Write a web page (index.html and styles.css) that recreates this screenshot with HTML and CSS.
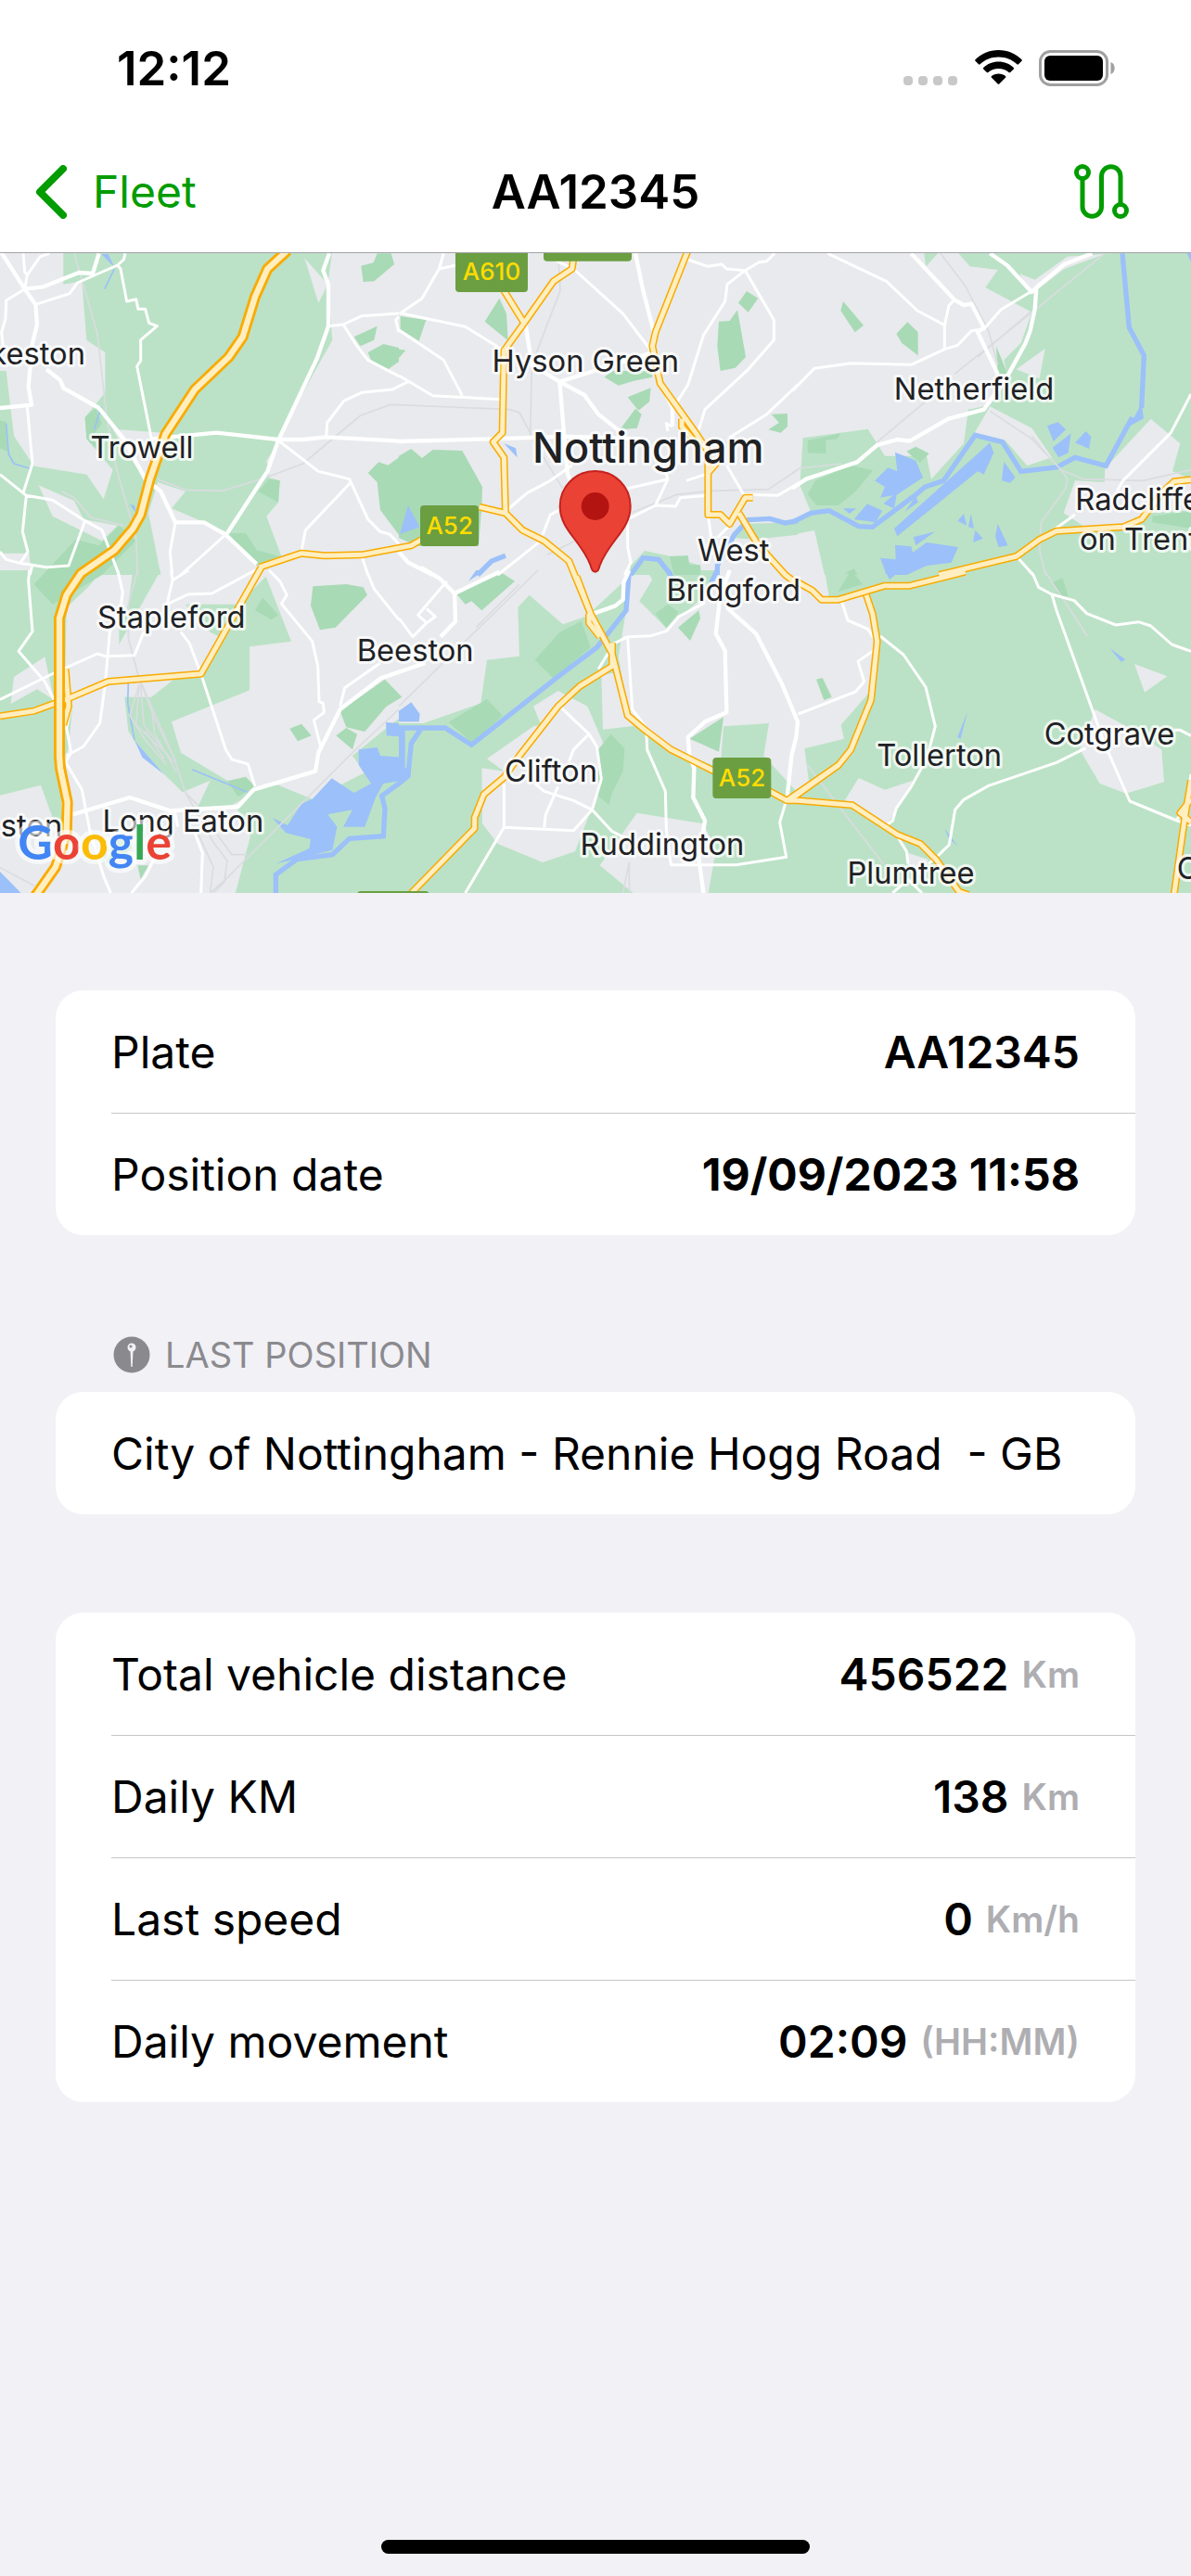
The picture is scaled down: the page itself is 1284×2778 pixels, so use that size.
FILE: index.html
```html
<!DOCTYPE html>
<html lang="en">

<head>
    <meta charset="UTF-8">
    <meta name="viewport" content="width=device-width, initial-scale=1.0">
    <title>AA12345</title>
    <link rel="stylesheet" href="styles.css">
</head>

<body>
    <header class="top">
        <div class="status">
            <span class="time">12:12</span>
            <div class="statusIcons">
                <svg width="59" height="38" viewBox="0 0 59 38" fill="#c8c8c8">
                    <rect x="0" y="28" width="10" height="10" rx="4" />
                    <rect x="16" y="28" width="10" height="10" rx="4" />
                    <rect x="32" y="28" width="10" height="10" rx="4" />
                    <rect x="48" y="28" width="10" height="10" rx="4" />
                </svg>
                <svg width="51" height="38" viewBox="0 0 51 38">
                    <path d="M25.500 0C35.500 0 44 4 50.500 10.200Q51.200 11 50.500 11.800L47 15.300Q46.200 16 45.400 15.300C40 10.200 33 7.500 25.500 7.500S11 10.200 5.600 15.300Q4.800 16 4 15.300L.5 11.800Q-.2 11 .5 10.200C7 4 15.500 0 25.500 0Z" />
                    <path d="M25.500 12.500C31.800 12.500 37.500 14.900 41.800 18.900Q42.500 19.700 41.800 20.500L38.200 24Q37.400 24.700 36.600 24C33.600 21.400 29.700 19.900 25.500 19.900S17.400 21.400 14.400 24Q13.600 24.700 12.800 24L9.200 20.500Q8.500 19.700 9.200 18.900C13.500 14.900 19.200 12.500 25.500 12.500Z" />
                    <path d="M25.500 25.500C28.500 25.500 31.200 26.600 33.200 28.200Q33.800 28.900 33.200 29.600L26.300 36.500Q25.500 37.200 24.700 36.500L17.800 29.600Q17.200 28.900 17.800 28.200C19.800 26.600 22.500 25.500 25.500 25.500Z" />
                </svg>
                <svg width="82" height="39" viewBox="0 0 82 39">
                    <rect x="1.500" y="1.500" width="72" height="36" rx="11" fill="none" stroke="#a0a0a0" stroke-width="3" />
                    <rect x="6" y="6" width="63" height="27" rx="6" />
                    <path d="M77.500 13C83 15 83 24 77.500 26Z" fill="#a0a0a0" />
                </svg>
            </div>
        </div>
        <nav class="navBar">
            <a class="back" href="#fleet">
                <svg width="34" height="58" viewBox="0 0 34 58">
                    <path d="M30 4L5 29L30 54" />
                </svg>
                Fleet
            </a>
            <h1>AA12345</h1>
            <button class="routeButton" type="button" aria-label="Route">
                <svg width="60" height="60" viewBox="0 0 60 60">
                    <circle cx="9" cy="9" r="6.500" />
                    <circle cx="50" cy="50" r="6.500" />
                    <path d="M9 16V46A10 10 0 0 0 29.500 46V13A10 10 0 0 1 50 13V43" />
                </svg>
            </button>
        </nav>
    </header>

    <!-- map units are a third of a pixel on the widest phone -->
    <svg class="map" viewBox="0 0 3852 2070" role="img" aria-label="Map of Nottingham">
        <g class="land">
            <path transform="translate(0 -9)" d="M205 0H1075L1060 110 1075 290 980 460 900 620 862 680 870 735 905 745 900 815 862 860 910 990 870 1000 730 910 555 835 600 780 510 750 480 850 520 1050H100L95 980H0V390H20L45 600 110 698 280 725 335 805 365 710 280 610 275 540 340 460V330L280 290 265 100 205 110Z" />
            <path transform="translate(1290 -9)" d="M750 1020L795 972 880 990 975 1020 980 1050H745ZM1080 930L1110 885 1290 880V920L1150 935Z" />
            <path transform="translate(2562 -9)" d="M425 0H480L433 52ZM530 0L575 52 665 63 625 120 775 200 740 300 685 355 700 420 640 500 570 515 555 625 450 740 435 665 300 665 245 578 35 607 25 760 60 845 0 870V920L72 905 105 1050H1290V0Z" />
            <path transform="translate(0 1026)" d="M0 0H330L285 55 215 120 210 400 235 440 220 580 195 640 200 830 170 800 132 695 0 728ZM430 0H520L385 240V180L415 110ZM600 110H770L860 20 942 230 807 247V388L555 490 585 590 735 680 830 700 820 720 740 765H640L680 680 590 718 460 590 415 520 403 410H490L560 355 655 330 720 220 680 200ZM1290 480L1250 510 1140 600 1180 655 1010 740 900 695 830 700 765 765 810 860 760 1050H1290ZM330 920L400 850 430 900 350 950Z" />
            <path transform="translate(1290 1026)" d="M0 495H80L265 430 285 290 390 278 385 120 422 80 530 175 605 150 745 20 735 130 710 280 745 480 880 580 1040 640 1050 505 1197 495 1180 600 1290 720V1050H0ZM800 0H1030L970 100 865 187 778 100 820 30Z" />
            <path transform="translate(2562 1026)" d="M105 0H1290V1050H0V735L55 690 40 577 168 545 158 500 250 395 270 200 240 80 120 90Z" />
        </g>
        <g class="town">
            <path transform="translate(0 -9)" d="M365 578L530 590 480 740 440 700 400 640ZM125 760L240 810 270 870 380 890 330 940 170 860ZM985 25L1060 110 1030 170Z" />
            <path transform="translate(2562 -9)" d="M735 75L785 95 890 20 1010 12 880 60 790 130 765 130ZM725 385L818 318 800 415ZM640 505L775 575 840 670 760 697 690 615 590 590ZM1160 545L1255 625 1230 715 1290 740V840L1160 850 1070 895 940 890 878 850 915 745 1010 750 1012 705Z" />
            <path transform="translate(0 1026)" d="M45 345L145 280 175 420 120 385 35 432Z" />
            <path transform="translate(1290 1026)" d="M268 640L340 650 285 610 435 505 460 500 435 440 515 390 610 440 670 580 650 700 570 910 465 945 320 885 270 820ZM655 340L705 330 745 480 790 500 660 515ZM770 785L985 820 1025 905 1000 1050H765L650 955Z" />
            <path transform="translate(2562 1026)" d="M215 672L300 710 390 680 330 790 300 830 170 745ZM375 915L440 935 430 1000 375 960ZM980 450L1090 510 1195 580 1203 685 1080 722 995 690 930 580ZM1107 303L1213 343 1140 395Z" />
        </g>
        <g class="park">
            <path transform="translate(0 -9)" d="M1168 50L1208 40 1220 10H1265L1275 45 1210 100 1175 102ZM1145 280L1220 245 1210 290 1165 310ZM1190 330L1240 303 1290 315V360L1255 385 1200 355ZM1190 720L1225 685 1255 695 1290 670V920L1230 840 1220 750ZM835 780L870 740 905 745 900 815ZM735 915H795L830 970 905 990 830 1020ZM275 540L310 510 330 560 300 600 320 650 280 610ZM0 550L20 555 25 650 0 640ZM110 1080L245 935 320 955 385 890 440 940 330 1050 170 1145Z" />
            <path transform="translate(1290 -9)" d="M5 213L88 225 65 293 5 255ZM325 155L348 205 353 292 278 230ZM1125 132L1162 155 1130 200 1098 170ZM1095 193L1122 345 1088 380 1040 390 1030 310 1035 230 1070 228ZM665 410L690 390 820 390 820 410 760 422 710 437ZM740 475L815 445 810 490 775 518ZM765 512L785 530 770 575 715 580ZM1205 530L1257 528V570L1235 590 1195 580 1230 558ZM0 665L40 642 75 672 110 645 205 648 270 765 268 825 258 957H60L0 930ZM0 320L22 323 0 348ZM875 990L935 987 940 1018H975V1050H890Z" />
            <path transform="translate(2562 -9)" d="M165 165L231 243 203 265 157 195ZM373 232L407 265V340L355 300 337 270ZM50 615L158 592 145 610 108 615 110 657 50 655ZM50 790L75 745 190 695 262 712 205 780 150 825H80ZM370 650L400 635 443 657 413 688ZM660 310L697 400H665ZM170 1045L200 1030 212 1050ZM1165 860L1290 845V900L1165 880Z" />
            <path transform="translate(0 1026)" d="M1012 52L1120 45 1175 55 1188 80 1085 185 1035 193 1005 115ZM937 512L975 497 1007 535 963 553ZM1100 455L1245 353 1300 410 1250 440 1180 522 1120 508ZM1087 535L1120 510 1155 530 1140 580ZM735 682L795 668 825 700 770 733ZM825 130L850 88 900 145 878 160ZM445 955H480L455 1000Z" />
            <path transform="translate(1290 1026)" d="M185 75L335 10 375 35 268 130 235 100 215 110ZM440 290L520 200 590 165 610 220 620 250 500 350ZM160 492L285 417 335 470 240 560ZM830 140L870 110 905 135 865 187ZM903 185L970 130 975 155 942 228ZM940 545L1050 475 1035 587ZM645 580L685 530 730 575 725 650 690 720 680 760 645 730Z" />
            <path transform="translate(2562 1026)" d="M148 70L190 0 228 45ZM840 40L875 25 893 85 865 85ZM78 353L98 348 128 410 103 420Z" />
        </g>
        <g class="lake">
            <path transform="translate(0 -9)" d="M328 12H350L370 55ZM420 822L435 825 440 850Z" />
            <path transform="translate(1290 -9)" d="M30 825L67 895 3 918ZM340 625L378 640 383 670Z" />
            <path transform="translate(2562 -9)" d="M333 653L400 680 423 735 340 790 285 800 300 765 267 745 310 703 340 715ZM640 622L652 655 620 725 600 715 340 925 330 900ZM200 870L243 820 292 842 270 880ZM165 835H208L185 852ZM295 820L340 780 330 835ZM365 845L400 795 407 815ZM825 568L860 555 885 580 845 618ZM842 638L902 592 893 655 862 670ZM915 622L950 585 967 603 960 642ZM685 683L722 735 705 752 678 745ZM535 875L555 852 565 890ZM578 852L588 900 570 895ZM592 905L617 932 585 945ZM665 885L698 955 668 960 657 925ZM392 928L462 910 400 955ZM333 953L385 958 390 977 435 945 537 960 515 1010 435 1020 370 1050H305L285 995 335 1000ZM1130 495L1137 543 1090 570ZM1272 0H1290V38Z" />
            <path transform="translate(0 1026)" d="M435 550L460 580 530 660 460 605ZM1010 740L1073 673 1145 720 1200 690 1160 630V580L1220 573 1230 600 1300 605V680L1240 690 1215 735 1180 830 1110 830 1140 775 1060 790 1090 830 1075 905 890 950 1000 900 1005 870 925 850 880 800 930 825 975 755ZM1248 492L1290 495V538L1250 535ZM0 975L68 1044H0Z" />
            <path transform="translate(1290 1026)" d="M0 455L40 427 68 465 65 490H0ZM0 505H20V640H38V670L0 700ZM225 35L280 0H250Z" />
            <path transform="translate(2562 1026)" d="M1027 252L1077 288 1065 297ZM567 457L545 545 535 540ZM493 835L537 895 505 865ZM300 0H400L370 15 340 10 315 30Z" />
        </g>
        <g class="river">
            <path class="stream" transform="translate(0 -9)" d="M370 60L338 125M328 505L305 580M20 560L28 660 45 690 105 708" />
            <path transform="translate(1290 -9)" d="M255 1050L300 1005 345 988M750 1050L790 995 840 1000 880 1050M1030 1050V1020L1085 920 1130 872 1200 868 1250 882 1290 875" />
            <path transform="translate(2562 -9)" d="M0 880L60 850 120 842 215 893 260 895 400 790 430 765 490 745 592 598 680 620 740 715 855 702 915 670 1015 697 1100 540M1068 10L1090 250 1138 340 1130 510" />
            <path class="stream" transform="translate(0 1026)" d="M415 365L413 430 435 550M622 645L800 718" />
            <path transform="translate(0 1026)" d="M892 1044V985L960 935 1075 920 1130 868 1240 860 1245 770 1235 730 1290 690 1320 660 1330 560 1360 515" />
            <path transform="translate(1290 1026)" d="M745 0L735 130 640 250 520 340 235 565 150 510 0 510M1030 0L1010 40M870 0L885 30" />
        </g>
        <g class="rail">
            <path transform="translate(0 -9)" d="M240 10L315 270 345 540 375 700 440 930 445 1050M510 740L600 775 720 778 860 735 980 690 1165 535 1260 500 1290 500M200 780L240 800 295 865 400 890" />
            <path transform="translate(1290 -9)" d="M515 10L522 130 430 370 425 600 530 770M0 500L360 515 390 525 425 590M480 985L750 850 900 790 1010 778 1195 773 1290 710" />
            <path transform="translate(2562 -9)" d="M480 10L560 115 635 260 665 370M1010 10L770 205 525 400M770 200L600 345M430 490L275 620M0 720L25 705 160 690M640 520L775 610 870 710 940 740 1135 745 1290 710M775 600L840 680M870 710L890 740 885 770 805 880 800 970 820 1050" />
            <path transform="translate(0 1026)" d="M445 0L415 110V220L450 350 560 600 600 720 690 880 735 940 725 1010 690 1044M600 720L640 760M655 790L750 920 800 920M1290 450L1140 590 730 1000 680 1044M640 850L690 960 680 1044M450 370L420 470 470 550 540 630M450 370L440 500 545 600M455 370L465 500 560 620M460 370L490 440 500 530 570 650M450 350L500 480 570 620M470 520L530 610M0 962L110 1020" />
            <path transform="translate(1290 1026)" d="M450 0L0 440M390 45L250 185M745 945L725 1044M745 945V1044" />
            <path transform="translate(2562 1026)" d="M815 0L955 213M45 625L295 950" />
        </g>
        <g class="road">
            <path transform="translate(0 -9)" d="M75 10L80 70 88 80 130 20 160 10M88 80L80 125M405 10L400 30 380 48 250 105 225 140 115 175M80 125L20 162 18 220 5 265 10 310M380 48L390 60 410 165 440 158 447 190 470 190 482 235 508 245 455 290V357L443 375 490 610M735 915L585 1050M1062 245L1110 240 1170 212 1290 204M1110 240L1155 310 1190 355 1290 407M1290 440L1270 450 1170 460 1112 487 1058 558 1055 605M1290 215L1280 225 1290 265M900 615L1030 715 1130 740 1190 870 1230 910 1260 918 1290 950M1135 750L988 905 975 975M88 505L105 690 75 785M0 725L85 793 170 808 275 875 330 905 385 1050M85 793L73 910 90 975 65 1012M275 875L222 1020 150 1025 65 1012 20 1000 0 975M567 880L550 975 557 1050M1170 990L1190 1050M105 1015L97 1050" />
            <path transform="translate(1290 -9)" d="M145 10L130 60 75 155 5 203 215 247 340 325M130 60L185 48M0 258L145 355 205 470M0 405L110 470 330 482M0 440L30 425M510 35L565 60 725 205 820 330M935 30L1000 52 1045 45 1060 60 1120 65 1165 38 1190 35 1215 10M1120 65L1062 110 1055 165 985 275 935 435 900 490M1120 65L1213 225V290L1130 385 990 515 970 580M1290 435L1190 530 1070 605M350 840L415 785 490 745 560 695M465 920L490 855 530 835M320 1050L465 935M740 770L870 740 830 825 740 870V960L750 1010 730 1050M870 740L855 700M830 825L895 828 910 800 1000 793M930 745L1000 722M1060 695L1115 790 1225 793 1290 755M1000 855L1010 930M1075 885L1030 930M885 570L865 560 870 585" />
            <path transform="translate(2562 -9)" d="M115 10L305 100 405 195 493 242V320M525 160L507 178 493 242M0 455L72 382 190 365 385 370 493 320 535 307 580 260 620 255 675 192 770 135M1290 465L1225 590 1070 745 1050 780M915 855L845 905M730 995L780 1050" />
            <path transform="translate(0 1026)" d="M95 0L92 35 105 198 60 262 145 360 175 420M0 418L180 330 315 270 340 278 435 275 465 200M380 0L397 70 390 120 355 200 340 370 323 495 270 570 215 600M610 0L558 32 553 0M558 32L540 110 608 78 685 75 825 0M585 200L612 235 650 335 730 580 750 612 802 627 825 700M870 0L905 35 928 80 910 108 1010 230 1028 310 1032 425 1045 430 1048 460 1015 485 1038 575M1100 440L1115 380 1230 300M1185 0L1210 60 1290 160M230 440L215 510 230 590 212 620 265 710 290 840 335 990 358 1044M425 1044L470 990 500 930M565 780L575 830M630 850L655 915 650 1044" />
            <path transform="translate(1290 1026)" d="M155 35L62 145 90 170 118 150 90 125M0 155L45 215 90 170M690 240L740 215 815 212 865 197 905 150 990 105M740 215L755 450 800 510 803 580 862 715 865 840 880 953H1090L1253 928 1232 815 1250 755M520 440L615 530 640 570 655 675 625 775 565 842 340 832V690M340 832L215 1044M615 530L565 580 550 620M440 690L470 715 565 745 625 775 690 845 740 870M515 700L475 790 470 832M685 255L645 320" />
            <path transform="translate(2562 1026)" d="M160 100L180 162 245 190 270 230M285 213L360 273 432 378 463 505 435 610 385 700 337 770 325 810 305 825M270 255L213 295 233 360 205 393 20 465M765 0L780 15 797 55 840 78 912 98 953 140 1047 177 1120 167 1160 180 1228 240 1290 262M840 78L855 130 1010 560 1092 747 1245 810 1290 825M950 575L855 622 635 697 555 742 527 775 508 888 465 930 440 950M1235 517H1255L1290 535M340 860L370 910 375 950M325 1044L375 1000 420 1044M1245 805L1275 770 1290 660" />
        </g>
        <g class="road main">
            <path transform="translate(0 -9)" d="M0 0L80 125 115 175 120 240 105 300 92 440 102 500 0 510M320 10L300 75 255 72 140 118 80 125M150 385L195 420 205 445 320 510 400 610 470 740 520 780 567 880H660L730 920 830 1015M1065 10L1045 65 1062 110V245L1025 350 900 615 865 715 735 915M490 610L700 590 900 612H980L1055 604 1290 617" />
            <path transform="translate(1290 -9)" d="M0 618L300 610 540 602 780 610M410 240L430 370 520 425 545 720 560 760M520 425L680 375 820 330M520 425L600 468 645 530 720 590M765 10L790 130 825 265M855 445L885 510V570M0 975L30 1010 110 1050" />
            <path transform="translate(2562 -9)" d="M385 10L525 160 555 177 580 173 620 250 600 265 665 400M640 10L695 48 775 135 790 120M0 770L45 740 210 685 275 630 340 612 380 617 505 545 620 515 700 400 755 300 770 260 785 190 790 120 880 45 970 10" />
            <path transform="translate(0 1026)" d="M235 790L420 735 550 778 770 765 820 710 1020 650 1030 590 1100 450 1230 350 1375 300" />
            <path transform="translate(1290 1026)" d="M70 -10L130 25 180 75 183 165 135 215M180 75L325 5M615 145L700 115 725 95 727 40 745 0M1070 0L1040 80 1025 205 1055 260 1060 460 990 490 935 540 940 600 955 640 952 735 990 810 970 930 985 1044M1060 120L1155 205 1240 370 1290 490 1285 540 1270 600 1255 745" />
        </g>

        <defs>
            <g id="trunk">
                <path transform="translate(0 -9)" d="M840 1025L975 980 1050 988 1170 985 1330 955 1365 935" />
                <path transform="translate(1290 -9)" d="M260 830L345 850 400 905 470 940 550 1005 620 1175M565 25L560 60 500 100 405 235 340 325 335 590 305 620 340 670 345 850M340 130L405 235M935 0L830 265 820 310 845 430 960 590 1000 650V855H1040L1070 885 1120 800H1145M1100 850L1160 950 1250 1050 1290 1080M915 545V570L950 610M1000 720L1030 685" />
                <path transform="translate(2562 -9)" d="M475 1050L725 990 800 935 855 908 1070 895 1130 870 1200 780 1235 748 1290 742" />
                <path transform="translate(0 1026)" d="M845 -10L650 335 350 360 220 415 110 455 0 472M212 320L222 440 205 500" />
                <path transform="translate(1290 1026)" d="M575 20L620 140 690 270 740 470 800 520 880 580 950 615 1030 655M615 140V170L650 215M690 235V310L585 375 515 440 390 600 340 670 275 725 245 800V835L35 1050M1190 710L1255 745H1290M1255 745L1422 630" />
                <path transform="translate(2562 1026)" d="M0 35L20 40 65 65 95 95H150L300 50H380L560 5M18 745L195 760 340 855 415 885 465 935 540 1040 570 1050M0 738L150 630 190 580 255 420 275 230 260 140 240 80M1290 680L1270 800 1235 1050M1290 740L1255 785 1290 815" />
            </g>
            <path id="motorway" d="M930 -9L865 51 825 141 785 271 740 336 630 441 535 586 485 731 455 846 430 891 370 961 262 1036 215 1106 192 1181V1626L195 1666 218 1776 215 1876 180 1986 110 2086" />
        </defs>
        <use class="trunkEdge" href="#trunk" />
        <use class="trunkFill" href="#trunk" />
        <use class="motorwayEdge" href="#motorway" />
        <use class="motorwayFill" href="#motorway" />

        <g class="shield">
            <rect x="1473" y="-20" width="234" height="146" rx="12" />
            <rect x="1758" y="-20" width="285" height="46" rx="12" />
            <rect x="1359" y="816" width="189" height="132" rx="12" />
            <rect x="2305" y="1632" width="189" height="132" rx="12" />
            <rect x="1155" y="2064" width="233" height="40" rx="12" />
            <text x="1590" y="88">A610</text>
            <text x="1454" y="910">A52</text>
            <text x="2400" y="1726">A52</text>
        </g>

        <g class="place">
            <text class="end" x="276" y="359">Ilkeston</text>
            <text x="459" y="663">Trowell</text>
            <text x="1894" y="383">Hyson Green</text>
            <text class="city" x="2096" y="678">Nottingham</text>
            <text x="2372" y="996">West</text>
            <text x="2372" y="1126">Bridgford</text>
            <text x="3150" y="474">Netherfield</text>
            <text class="start" x="3478" y="831">Radcliffe</text>
            <text class="start" x="3492" y="959">on Trent</text>
            <text x="554" y="1213">Stapleford</text>
            <text x="1343" y="1319">Beeston</text>
            <text x="1782" y="1711">Clifton</text>
            <text x="2142" y="1948">Ruddington</text>
            <text x="3038" y="1659">Tollerton</text>
            <text x="3588" y="1589">Cotgrave</text>
            <text x="2946" y="2039">Plumtree</text>
            <text x="592" y="1871">Long Eaton</text>
            <text class="end" x="202" y="1888">ston</text>
            <text class="start" x="3806" y="2026">C</text>
        </g>

        <text class="google" x="58" y="1963"><tspan fill="#4285f4">G</tspan><tspan fill="#ea4335">o</tspan><tspan fill="#fbbc05">o</tspan><tspan fill="#4285f4">g</tspan><tspan fill="#34a853">l</tspan><tspan fill="#ea4335">e</tspan></text>

        <path class="pin" d="M1925 705C1860 705 1811 757 1811 819C1811 895 1880 930 1910 1010Q1914 1031 1925 1031T1940 1010C1970 930 2039 895 2039 819C2039 757 1990 705 1925 705Z" />
        <circle class="pinDot" cx="1925" cy="819" r="45" />
    </svg>

    <main>
        <dl class="card">
            <div class="row">
                <dt>Plate</dt>
                <dd>AA12345</dd>
            </div>
            <div class="row">
                <dt>Position date</dt>
                <dd class="date">19/09/2023 11:58</dd>
            </div>
        </dl>

        <section>
            <h2>
                <svg width="40" height="40" viewBox="0 0 40 40">
                    <circle cx="20" cy="20" r="19.500" fill="#8a8a8e" />
                    <circle cx="20" cy="12" r="4.500" fill="#f2f1f6" />
                    <path d="M18.500 15H21.500L20.700 33H19.300Z" fill="#f2f1f6" />
                    <circle cx="19" cy="11" r="1.500" fill="#8a8a8e" />
                </svg>
                LAST POSITION
            </h2>
            <div class="card">
                <p class="row address">City of Nottingham - Rennie Hogg Road&nbsp; - GB</p>
            </div>
        </section>

        <dl class="card">
            <div class="row">
                <dt>Total vehicle distance</dt>
                <dd>456522 <small>Km</small></dd>
            </div>
            <div class="row">
                <dt>Daily KM</dt>
                <dd>138 <small>Km</small></dd>
            </div>
            <div class="row">
                <dt>Last speed</dt>
                <dd>0 <small>Km/h</small></dd>
            </div>
            <div class="row">
                <dt>Daily movement</dt>
                <dd>02:09 <small>(HH:MM)</small></dd>
            </div>
        </dl>
    </main>

    <div class="homeBar"></div>
</body>

</html>
```
FILE: styles.css
```css
* {
    box-sizing: border-box;
}

body {
    display: flex;
    flex-direction: column;
    min-height: 100vh;
    margin: 0;
    background-color: #f2f1f6;
    color: #000;
    font-family: Inter, "Liberation Sans", sans-serif;
    font-size: 48px;
}

h1, h2, p, dl, dd {
    margin: 0;
}

svg {
    display: block;
}

/* Status bar and navigation */

.top {
    background-color: #fff;
    border-bottom: 1px solid #a3a3a8;
}

.status {
    display: flex;
    justify-content: space-between;
    align-items: center;
    height: 141px;
    padding: 5px 82px 0 126px;
}

.time {
    font-size: 51px;
    font-weight: 600;
}

.statusIcons {
    display: flex;
    align-items: center;
    gap: 18px;
}

.navBar {
    display: grid;
    grid-template-columns: 1fr auto 1fr;
    align-items: center;
    height: 131px;
    padding: 0 38px;
}

.back {
    display: flex;
    align-items: center;
    gap: 28px;
    color: #009c00;
    text-decoration: none;
}

.back path {
    fill: none;
    stroke: #009c00;
    stroke-width: 8;
    stroke-linecap: round;
    stroke-linejoin: round;
}

h1 {
    font-size: 51px;
    font-weight: 600;
}

.routeButton {
    justify-self: end;
    padding: 0 28px;
    border: none;
    background: none;
}

.routeButton svg {
    fill: none;
    stroke: #009c00;
    stroke-width: 5;
}

/* Map */

.map {
    width: 100%;
    height: auto;
    background-color: #e8eaed;
}

.land {
    fill: #bbe2c6;
}

.town {
    fill: #e8eaed;
}

.park {
    fill: #a8dab5;
}

.lake {
    fill: #9cc0f9;
}

.river {
    fill: none;
    stroke: #9cc0f9;
    stroke-width: 16;
}

.stream {
    stroke-width: 5;
}

.rail {
    fill: none;
    stroke: #dadce0;
    stroke-width: 5;
}

.road {
    fill: none;
    stroke: #fff;
    stroke-width: 9;
    stroke-linejoin: round;
}

.main {
    stroke-width: 13;
}

.trunkEdge, .trunkFill, .motorwayEdge, .motorwayFill {
    fill: none;
    stroke-linejoin: round;
}

.trunkEdge, .motorwayEdge {
    stroke: #f9ab00;
}

.trunkFill, .motorwayFill {
    stroke: #ffeec0;
}

.trunkEdge {
    stroke-width: 24;
}

.trunkFill {
    stroke-width: 15;
}

.motorwayEdge {
    stroke-width: 36;
}

.motorwayFill {
    stroke-width: 19;
}

.shield rect {
    fill: #6b9e41;
}

.shield text {
    fill: #ffdc00;
    font-size: 78px;
    font-weight: 500;
    text-anchor: middle;
}

.place text {
    fill: #202124;
    stroke: rgba(255, 255, 255, 0.75);
    stroke-width: 18;
    stroke-linejoin: round;
    paint-order: stroke;
    font-size: 98px;
    text-anchor: middle;
}

.place .city {
    font-size: 135px;
    font-weight: 500;
}

.place .start {
    text-anchor: start;
}

.place .end {
    text-anchor: end;
}

.google {
    stroke: rgba(255, 255, 255, 0.6);
    stroke-width: 30;
    stroke-linejoin: round;
    paint-order: stroke;
    font-family: Lato, sans-serif;
    font-size: 156px;
    font-weight: 700;
}

.pin {
    fill: #ea4335;
    stroke: #c5221f;
    stroke-width: 6;
}

.pinDot {
    fill: #b31412;
}

/* Vehicle details */

main {
    display: flex;
    flex-direction: column;
    gap: 106px;
    flex: 1;
    padding: 105px 60px;
}

.card {
    border-radius: 30px;
    background-color: #fff;
    overflow: hidden;
}

.row {
    display: flex;
    justify-content: space-between;
    align-items: center;
    height: 132px;
    margin-left: 60px;
    padding-right: 60px;
}

.row + .row {
    border-top: 1px solid #c6c6c8;
}

.address {
    padding-right: 20px;
    white-space: nowrap;
}

dd {
    display: flex;
    align-items: center;
    gap: 14px;
    font-weight: 600;
}

.date {
    font-weight: 700;
}

small {
    color: #aeaeb2;
    font-size: 39px;
}

h2 {
    display: flex;
    align-items: center;
    gap: 16px;
    height: 45px;
    margin-bottom: 18px;
    padding-left: 62px;
    color: #8a8a8e;
    font-size: 38px;
    font-weight: 400;
}

.homeBar {
    align-self: center;
    width: 36%;
    height: 15px;
    margin-bottom: 24px;
    border-radius: 8px;
    background-color: #000;
}
```
